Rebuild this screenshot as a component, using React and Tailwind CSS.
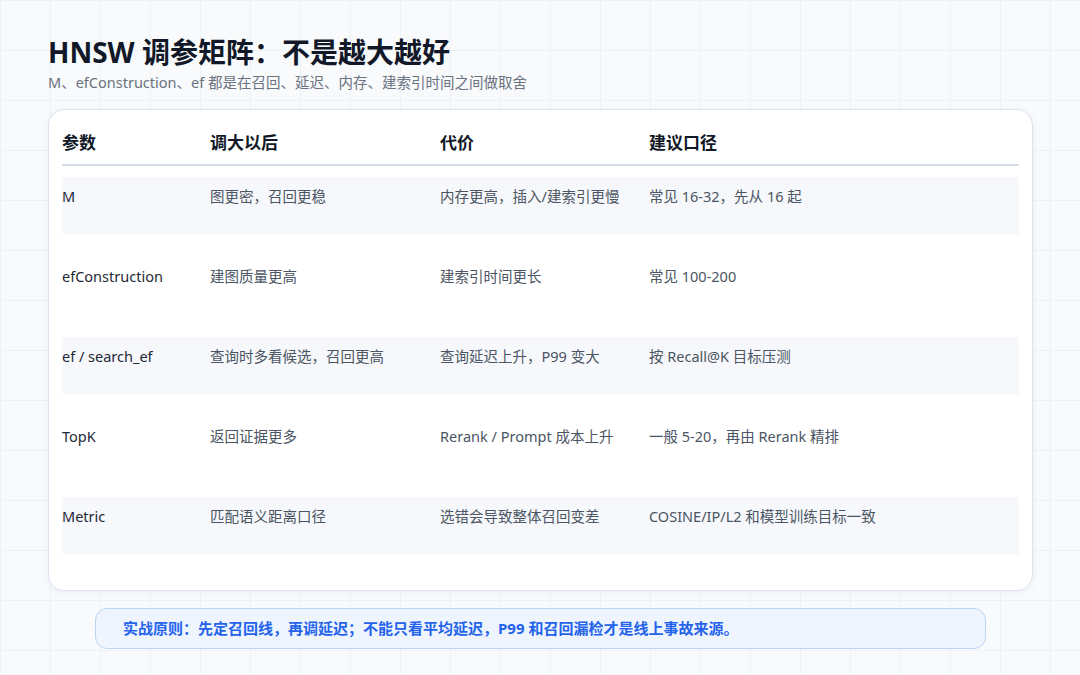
export default function App() {
  const rows = [
    ["M", "图更密，召回更稳", "内存更高，插入/建索引更慢", "常见 16-32，先从 16 起"],
    ["efConstruction", "建图质量更高", "建索引时间更长", "常见 100-200"],
    ["ef / search_ef", "查询时多看候选，召回更高", "查询延迟上升，P99 变大", "按 Recall@K 目标压测"],
    ["TopK", "返回证据更多", "Rerank / Prompt 成本上升", "一般 5-20，再由 Rerank 精排"],
    ["Metric", "匹配语义距离口径", "选错会导致整体召回变差", "COSINE/IP/L2 和模型训练目标一致"],
  ];
  const cols = "grid grid-cols-[148px_230px_209px_1fr] px-0";
  return (
    <div
      className="w-[1080px] h-[675px] bg-[#f8fafc] bg-[linear-gradient(#eef1f5_1px,transparent_1px),linear-gradient(90deg,#eef1f5_1px,transparent_1px)] bg-[size:50px_50px] overflow-hidden"
      style={{ fontFamily: '"Noto Sans", "Noto Sans CJK SC", sans-serif' }}
    >
      <div className="pl-[48px] pt-[33px]">
        <div className="text-[28px] leading-[38px] font-bold text-[#111827]">HNSW 调参矩阵：不是越大越好</div>
        <div className="text-[14.5px] leading-[20px] text-[#6b7280] mt-[1px]">M、efConstruction、ef 都是在召回、延迟、内存、建索引时间之间做取舍</div>
      </div>
      <div className="ml-[48px] mt-[17px] w-[985px] h-[482px] bg-white rounded-[16px] border border-[#dbe3ee] shadow-[0_2px_8px_rgba(15,23,42,0.05)] px-[13px] pt-[20px]">
        <div className={`${cols} h-[36px] border-b-2 border-[#d5dde8] text-[17px] font-bold text-[#111827]`}>
          <div>参数</div><div>调大以后</div><div>代价</div><div>建议口径</div>
        </div>
        <div className="flex flex-col gap-[23px] mt-[11px]">
          {rows.map((r, i) => (
            <div key={i} className={`${cols} h-[57px] pt-[9px] text-[14.5px] ${i % 2 === 0 ? "bg-[#f6f8fb]" : ""}`}>
              <div className="text-[#1f2937]">{r[0]}</div>
              <div className="text-[#4b5563]">{r[1]}</div>
              <div className="text-[#4b5563]">{r[2]}</div>
              <div className="text-[#4b5563]">{r[3]}</div>
            </div>
          ))}
        </div>
      </div>
      <div className="ml-[95px] mt-[17px] w-[891px] h-[41px] rounded-[12px] bg-[#eef5ff] border border-[#bcd4f3] flex items-center pl-[27px] text-[15px] font-bold text-[#2563eb]">
        实战原则：先定召回线，再调延迟；不能只看平均延迟，P99 和召回漏检才是线上事故来源。
      </div>
    </div>
  );
}
